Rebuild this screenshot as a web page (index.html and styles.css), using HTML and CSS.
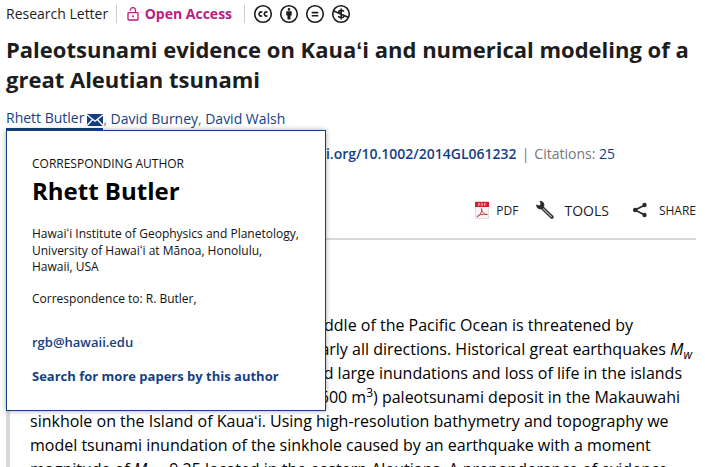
FILE: index.html
```html
<!DOCTYPE html>
<html lang="en">
<head>
  <meta charset="UTF-8">
  <meta name="viewport" content="width=device-width, initial-scale=1.0">
  <title>Paleotsunami evidence on Kauaʻi</title>
  <link rel="stylesheet" href="styles.css">
</head>
<body>
  <article class="article">
    <div class="meta">
      <span class="type">Research Letter</span>
      <span class="access">
        <svg class="lock" viewBox="0 0 12 14" width="12" height="14">
          <rect x="1" y="5.7" width="10" height="7.3" rx=".6"/>
          <path d="M3.3 3.8V3.2a2.6 2.6 0 0 1 5.2 0V5.5"/>
          <circle cx="6" cy="9.3" r="1"/>
        </svg>
        Open Access
      </span>
      <span class="licence">
        <svg viewBox="0 0 20 20" width="20" height="20">
          <circle cx="10" cy="10" r="8.3"/>
          <path d="M9.2 8.400a2 2 0 1 0 0 3.200M14.500 8.400a2 2 0 1 0 0 3.200"/>
        </svg>
        <svg viewBox="0 0 20 20" width="20" height="20">
          <circle cx="10" cy="10" r="8.3"/>
          <circle class="fill" cx="10" cy="5.4" r="1.3"/>
          <path class="fill" d="M7.3 7.3h5.4v4.2h-1.2v4h-3v-4H7.3z"/>
        </svg>
        <svg viewBox="0 0 20 20" width="20" height="20">
          <circle cx="10" cy="10" r="8.3"/>
          <path d="M6.7 8.6h6.6M6.7 11.7h6.6"/>
        </svg>
        <svg viewBox="0 0 20 20" width="20" height="20">
          <circle cx="10" cy="10" r="8.3"/>
          <path d="M12.8 7.6C12.2 6 7.8 5.7 7.8 8c0 2.2 5 1.8 5 4.1 0 2.2-4.7 2.2-5.5 0M10.2 4.4v11.2M2.3 6.8l15.4 6.7"/>
        </svg>
      </span>
    </div>

    <h1 class="title">Paleotsunami evidence on Kauaʻi and numerical modeling of a<br>great Aleutian tsunami</h1>

    <div class="authors">
      <div class="author active">
        <a>Rhett Butler</a>
        <svg class="mail" viewBox="0 0 16 12" width="16" height="12">
          <rect width="16" height="12"/>
          <path d="M0 .8l8 6.4 8-6.4M0 11.5l5.6-6M16 11.5l-5.6-6"/>
        </svg>
        <div class="popup">
          <p class="label">CORRESPONDING AUTHOR</p>
          <p class="name">Rhett Butler</p>
          <p class="place">Hawaiʻi Institute of Geophysics and Planetology,<br>University of Hawaiʻi at Mānoa, Honolulu,<br>Hawaii, USA</p>
          <p class="contact">Correspondence to: R. Butler,</p>
          <a class="email">rgb@hawaii.edu</a>
          <a class="search">Search for more papers by this author</a>
        </div>
      </div><span class="comma">,</span>
      <a class="author">David Burney</a><span class="comma">,</span>
      <a class="author">David Walsh</a>
    </div>

    <div class="published">
      <a class="doi">i.org/10.1002/2014GL061232</a>
      <span class="bar">|</span>
      <span class="cited">Citations: <a>25</a></span>
    </div>

    <div class="toolbar">
      <span class="tool pdf">
        <svg viewBox="0 0 16 18" width="16" height="18">
          <path d="M1.5.5h13v17h-13z" fill="#f5f3f3" stroke="#e2dede"/>
          <path d="M1 1h14v5H1z" fill="#c5252d"/>
          <path d="M4.5 5V2.5h1.3v1.3H4.5M7.500 2.500v2h1v-2zM10.500 5V2.500H12M10.500 3.700H12" fill="none" stroke="#f3c9cb" stroke-width=".6"/>
          <path d="M7.3 7.500C8.500 10.500 6.300 14 3.200 16c-.8-1.600 5-3.400 10.300-2.500-2.500.8-5.300-1.800-6.200-6z" fill="none" stroke="#cf3e46"/>
        </svg>
        PDF
      </span>
      <span class="tool tools">
        <svg viewBox="0 0 20 20" width="20" height="20">
          <path d="M8 8.500l8.800 8.500" fill="none" stroke="#2b2b27" stroke-width="3.800" stroke-linecap="round"/>
          <path d="M8 8.500l8.800 8.500" fill="none" stroke="#a9aaa4" stroke-width="1.300"/>
          <path d="M1 4.500l3.200 1 1.500-1.500L4.600 1C8 .6 10 3.500 9.200 6.300L6.600 9C4 10 1.200 8 1 4.500z" fill="#2b2b27"/>
        </svg>
        TOOLS
      </span>
      <span class="tool share">
        <svg viewBox="0 0 16 16" width="16" height="16">
          <path d="M13 3L3 8l10 5" fill="none" stroke="#2b2b27" stroke-width="1.8"/>
          <g fill="#2b2b27"><circle cx="12.5" cy="3" r="2.2"/><circle cx="3.2" cy="8" r="2.3"/><circle cx="12.5" cy="13" r="2.2"/></g>
        </svg>
        SHARE
      </span>
    </div>

    <section class="abstract">
      <p>
        <span class="line l1">iddle of the Pacific Ocean is threatened by</span>
        <span class="line l2">early all directions. Historical great earthquakes <i>M<sub>w</sub></i></span>
        <span class="line l3">d large inundations and loss of life in the islands</span>
        <span class="line l4">600 m<sup>3</sup>) paleotsunami deposit in the Makauwahi</span>
        <span class="line">sinkhole on the Island of Kauaʻi. Using high-resolution bathymetry and topography we</span>
        <span class="line">model tsunami inundation of the sinkhole caused by an earthquake with a moment</span>
        <span class="line">magnitude of <i>M<sub>w</sub></i> ~9.25 located in the eastern Aleutians. A preponderance of evidence</span>
      </p>
    </section>
  </article>
</body>
</html>
```
FILE: styles.css
```css
body {
  margin: 0;
  overflow: hidden;
  background: #fff;
  color: #1c1d1e;
  font-family: "Open Sans", sans-serif;
}

p, h1 {
  margin: 0;
}

.article {
  height: 467px;
  padding: 0 9px 0 6px;
  overflow: hidden;
  box-sizing: border-box;
}

.meta {
  display: flex;
  align-items: center;
  height: 27px;
  font-size: 14px;
}

.access {
  display: flex;
  align-items: center;
  height: 18px;
  margin-left: 8px;
  padding-left: 10px;
  border-left: 1px solid #ccc;
  color: #b9207f;
  font-weight: bold;
}

.lock {
  margin-right: 5.5px;
  fill: none;
  stroke: #b9207f;
  stroke-width: 1.3;
}

.lock circle {
  fill: #b9207f;
  stroke: none;
}

.licence {
  display: flex;
  align-items: center;
  gap: 6px;
  height: 18px;
  margin-left: 12px;
  padding-left: 7.5px;
  border-left: 1px solid #ccc;
}

.licence svg {
  fill: none;
  stroke: #1c1d1e;
  stroke-width: 1.6;
}

.licence .fill {
  fill: #1c1d1e;
  stroke: none;
}

.title {
  margin-top: 7px;
  font-size: 22px;
  line-height: 30px;
  white-space: nowrap;
}

.authors {
  display: flex;
  height: 23px;
  margin-top: 14px;
  font-size: 14px;
  line-height: 22px;
  color: #143f86;
}

.author {
  position: relative;
}

.active {
  display: flex;
  align-items: center;
  height: 20px;
  border-bottom: 3px solid #143f86;
}

.mail {
  margin: 3px 0 0 3px;
  fill: #143f86;
}

.mail path {
  fill: none;
  stroke: #fff;
  stroke-width: 1.3;
}

.comma {
  margin-right: 3.5px;
  color: #767676;
}

.popup {
  position: absolute;
  z-index: 1;
  top: 22px;
  left: 0;
  width: 320px;
  height: 281px;
  padding: 24px 25px;
  box-sizing: border-box;
  border: 1px solid #143f86;
  background: #fff;
  box-shadow: 0 0 5px rgba(0, 0, 0, 0.35);
  color: #111;
  font-size: 12px;
  line-height: 17px;
  white-space: nowrap;
}

.popup .name {
  margin-top: 3px;
  color: #000;
  font-size: 24px;
  font-weight: bold;
  line-height: 32px;
}

.popup .place {
  margin-top: 19px;
  line-height: 16.6px;
}

.popup .contact {
  margin-top: 14px;
}

.popup a {
  display: block;
  color: #143f86;
  font-size: 13px;
  font-weight: 600;
}

.popup .email {
  margin-top: 27px;
}

.popup .search {
  margin-top: 17px;
  font-weight: bold;
}

.published {
  display: flex;
  justify-content: flex-end;
  height: 22px;
  margin: 12px 81px 0 0;
  font-size: 14px;
  line-height: 22px;
  color: #767676;
}

.published a {
  color: #143f86;
}

.published .doi {
  font-weight: 600;
}

.published .bar {
  margin: 0 5px;
}

.toolbar {
  display: flex;
  justify-content: flex-end;
  align-items: center;
  height: 56px;
  margin-top: 17px;
  border-bottom: 2px solid #d8d8d8;
  font-size: 12px;
}

.tool {
  display: flex;
  align-items: center;
}

.pdf svg {
  margin-right: 6px;
}

.tools {
  margin-left: 17px;
  font-size: 14px;
}

.tools svg {
  margin-right: 9px;
}

.share {
  margin-left: 23px;
}

.share svg {
  margin-right: 11px;
}

.abstract {
  margin-top: 73px;
  color: #000;
}

.abstract p {
  padding-left: 20px;
  border-left: 4px solid #d8dadd;
  font-size: 16px;
  line-height: 24px;
}

.abstract sub,
.abstract sup {
  font-size: 75%;
  line-height: 0;
}

.line {
  display: block;
  white-space: nowrap;
}

/* lines that run behind the author popup */
.l1, .l2, .l3, .l4 {
  text-align: right;
}

.l1 {
  margin-right: 63px;
}

.l2 {
  margin-right: 4px;
}

.l3 {
  margin-right: 14px;
}

.l4 {
  margin-right: 16px;
}
```
